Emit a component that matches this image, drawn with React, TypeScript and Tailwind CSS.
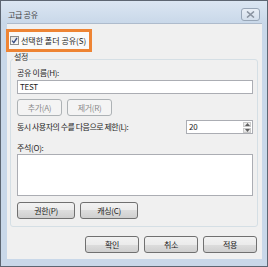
import type { ReactNode } from 'react'

const font = { fontFamily: '"Noto Sans CJK KR", "Noto Sans", sans-serif' }

/* Win7 style push button */
function Btn({ children, w, disabled }: { children: ReactNode; w: string; disabled?: boolean }) {
    return (
        <div
            className={
                disabled
                    ? `${w} h-[17px] rounded-[3px] border border-[#adb2b5] bg-[#f4f4f4] text-[#8a8a8a] flex items-center justify-center`
                    : `${w} h-[17px] rounded-[3px] border border-[#707070] bg-[linear-gradient(#f2f2f2_0%,#ebebeb_50%,#dddddd_50%,#cfcfcf_100%)] text-[#1a1a1a] flex items-center justify-center`
            }
        >
            <span className="leading-[12px]">{children}</span>
        </div>
    )
}

export default function App() {
    return (
        <div
            className="w-[268px] h-[267px] border border-[#5d6672] bg-[#c9d8e9] flex flex-col text-[8px] tracking-[-0.3px] text-[#1e1e1e]"
            style={font}
        >
            {/* title bar */}
            <div className="h-[22px] flex justify-between pl-[7px] pr-[7px] bg-[linear-gradient(#dbe6f2,#c9d8e9)]">
                <span className="pt-[8px] leading-[12px] text-[#444]">고급 공유</span>
                <div className="mt-[7px] w-[19px] h-[13px] rounded-[3px] border border-[#98a6b7] bg-[linear-gradient(#e9eff6,#d3deeb)] flex items-center justify-center">
                    <svg width="9" height="7" viewBox="0 0 9 7">
                        <path d="M1 0.5 L8 6.5 M8 0.5 L1 6.5" stroke="#8a93a0" strokeWidth="1.6" />
                    </svg>
                </div>
            </div>

            {/* client area */}
            <div className="ml-[6px] mr-[5px] w-[255px] h-[236px] bg-[#f0f0f0] border-t border-[#aebbcc] flex flex-col pl-[3px] pr-[4px]">
                {/* share checkbox */}
                <div className="relative mt-[11px] h-[11px] flex items-center gap-[2px]">
                    <div className="absolute -left-[4px] -top-[6px] w-[86px] h-[23px] border-[3px] border-[#ee8434] bg-[#fafafa]" />
                    <div className="relative w-[9px] h-[9px] border border-[#8e8f8f] bg-[linear-gradient(#e6e6e6,#fbfbfb)] flex items-center justify-center">
                        <svg width="7" height="7" viewBox="0 0 7 7">
                            <path d="M1 3.6 L2.8 5.6 L6 1" fill="none" stroke="#3b4f84" strokeWidth="1.4" />
                        </svg>
                    </div>
                    <span className="relative leading-[12px] tracking-[0px]">선택한 폴더 공유(S)</span>
                </div>

                {/* settings group */}
                <fieldset className="mt-[5px] border border-[#d5dfe5] rounded-[3px] pl-[6px] pr-[4px] pb-[7px] flex flex-col">
                    <legend className="-ml-[4px] px-[1px] pb-[4px] leading-[12px] text-[#333]">설정</legend>
                    <div className="leading-[12px]">공유 이름(H):</div>
                    <div className="mt-[1px] h-[14px] border border-[#abadb3] bg-white pl-[2px] flex items-center">
                        <span className="leading-[12px]">TEST</span>
                    </div>
                    <div className="mt-[5px] flex gap-[5px]">
                        <Btn w="w-[45px]" disabled>추가(A)</Btn>
                        <Btn w="w-[45px]" disabled>제거(R)</Btn>
                    </div>
                    <div className="mt-[4px] h-[14px] flex items-center justify-between">
                        <span className="leading-[12px] tracking-[-0.5px]">동시 사용자의 수를 다음으로 제한(L):</span>
                        <div className="w-[67px] h-[14px] border border-[#abadb3] bg-white flex">
                            <span className="flex-1 pl-[2px] leading-[12px]">20</span>
                            <div className="w-[10px] flex flex-col gap-[1px] p-[1px]">
                                <div className="flex-1 bg-[linear-gradient(#f3f3f3,#e1e1e1)] border border-[#c9c9c9] flex items-center justify-center">
                                    <svg width="5" height="3" viewBox="0 0 5 3"><path d="M0 3 L2.5 0 L5 3 Z" fill="#606060" /></svg>
                                </div>
                                <div className="flex-1 bg-[linear-gradient(#f3f3f3,#e1e1e1)] border border-[#c9c9c9] flex items-center justify-center">
                                    <svg width="5" height="3" viewBox="0 0 5 3"><path d="M0 0 L2.5 3 L5 0 Z" fill="#606060" /></svg>
                                </div>
                            </div>
                        </div>
                    </div>
                    <div className="mt-[8px] leading-[12px]">주석(O):</div>
                    <div className="h-[42px] border border-[#abadb3] bg-white" />
                    <div className="mt-[6px] flex gap-[5px]">
                        <Btn w="w-[58px]">권한(P)</Btn>
                        <Btn w="w-[58px]">캐싱(C)</Btn>
                    </div>
                </fieldset>

                {/* dialog buttons */}
                <div className="mt-[9px] flex justify-end gap-[5px] pr-[1px]">
                    <Btn w="w-[54px]">확인</Btn>
                    <Btn w="w-[54px]">취소</Btn>
                    <Btn w="w-[54px]">적용</Btn>
                </div>
            </div>
        </div>
    )
}
